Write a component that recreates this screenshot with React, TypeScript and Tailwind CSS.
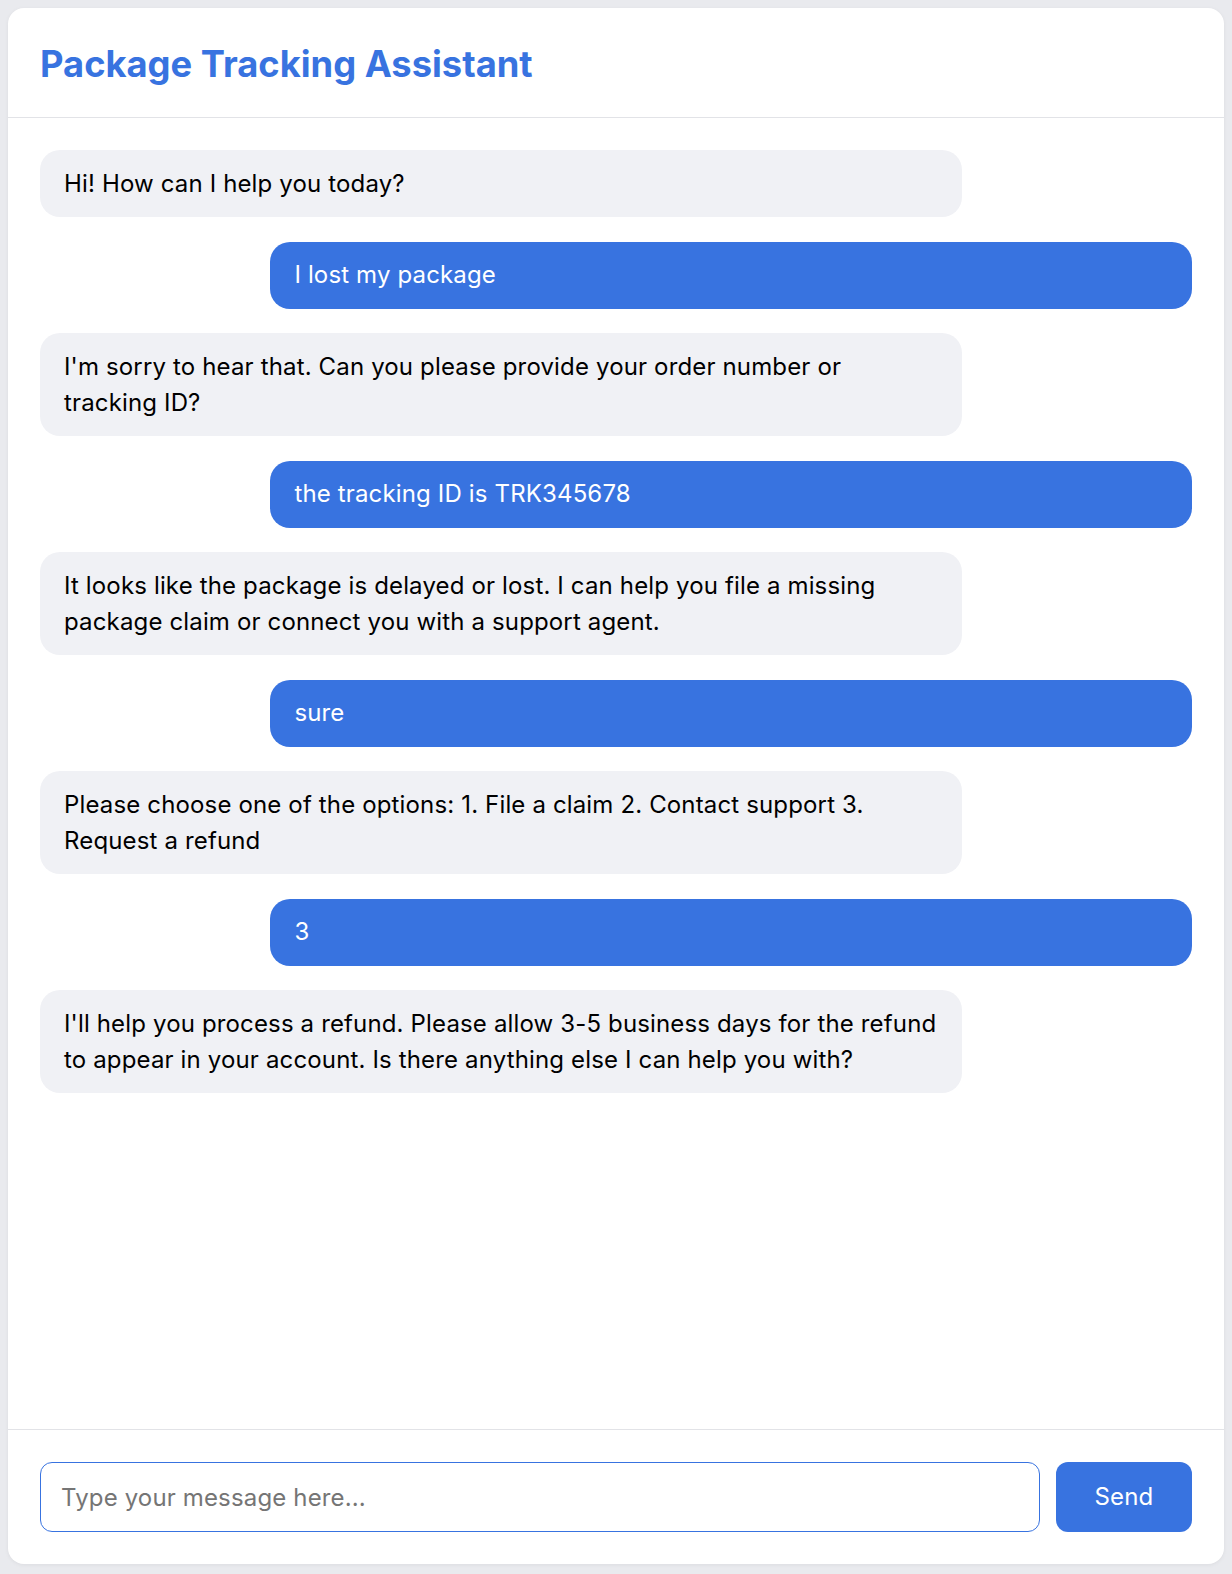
import React from "react";

type Msg = { from: "bot" | "user"; text: string };

const messages: Msg[] = [
  { from: "bot", text: "Hi! How can I help you today?" },
  { from: "user", text: "I lost my package" },
  { from: "bot", text: "I'm sorry to hear that. Can you please provide your order number or tracking ID?" },
  { from: "user", text: "the tracking ID is TRK345678" },
  { from: "bot", text: "It looks like the package is delayed or lost. I can help you file a missing package claim or connect you with a support agent." },
  { from: "user", text: "sure" },
  { from: "bot", text: "Please choose one of the options: 1. File a claim 2. Contact support 3. Request a refund" },
  { from: "user", text: "3" },
  { from: "bot", text: "I'll help you process a refund. Please allow 3-5 business days for the refund to appear in your account. Is there anything else I can help you with?" },
];

export default function App() {
  return (
    <div
      className="bg-[#e9eaee] w-full h-[1574px] pt-2 px-2"
      style={{ fontFamily: "Inter, 'Noto Sans', sans-serif" }}
    >
      <div className="h-[1556px] bg-white rounded-[16px] shadow-[0_1px_4px_rgba(0,0,0,0.06)] flex flex-col overflow-hidden">
        <div className="h-[110px] px-8 flex items-center border-b border-[#e2e3e7] shrink-0">
          <h1 className="text-[36.3px] font-bold text-[#3873e0] leading-none pt-[3px]">
            Package Tracking Assistant
          </h1>
        </div>
        <div className="flex-1 px-8 pt-8 flex flex-col gap-[24.5px]">
          {messages.map((m, i) => (
            <div key={i} className={m.from === "user" ? "flex justify-end" : "flex justify-start"}>
              <div
                className={
                  m.from === "user"
                    ? "w-[80%] bg-[#3873e0] text-white rounded-[20px] px-6 py-[15.5px] text-[24px] leading-[36px] tracking-[0.15px]"
                    : "w-[80%] bg-[#f0f1f5] text-black rounded-[20px] px-6 py-[15.5px] text-[24px] leading-[36px] tracking-[0.15px]"
                }
              >
                {m.text}
              </div>
            </div>
          ))}
        </div>
        <div className="border-t border-[#e2e3e7] p-8 flex gap-4 shrink-0">
          <input
            className="flex-1 h-[70px] rounded-[12px] border border-[#3873e0] px-5 text-[24px] tracking-[0.15px] outline-none placeholder:text-[#757575]"
            placeholder="Type your message here..."
          />
          <button className="w-[136px] h-[70px] rounded-[12px] bg-[#3873e0] text-white text-[24px] tracking-[0.15px]">
            Send
          </button>
        </div>
      </div>
    </div>
  );
}
